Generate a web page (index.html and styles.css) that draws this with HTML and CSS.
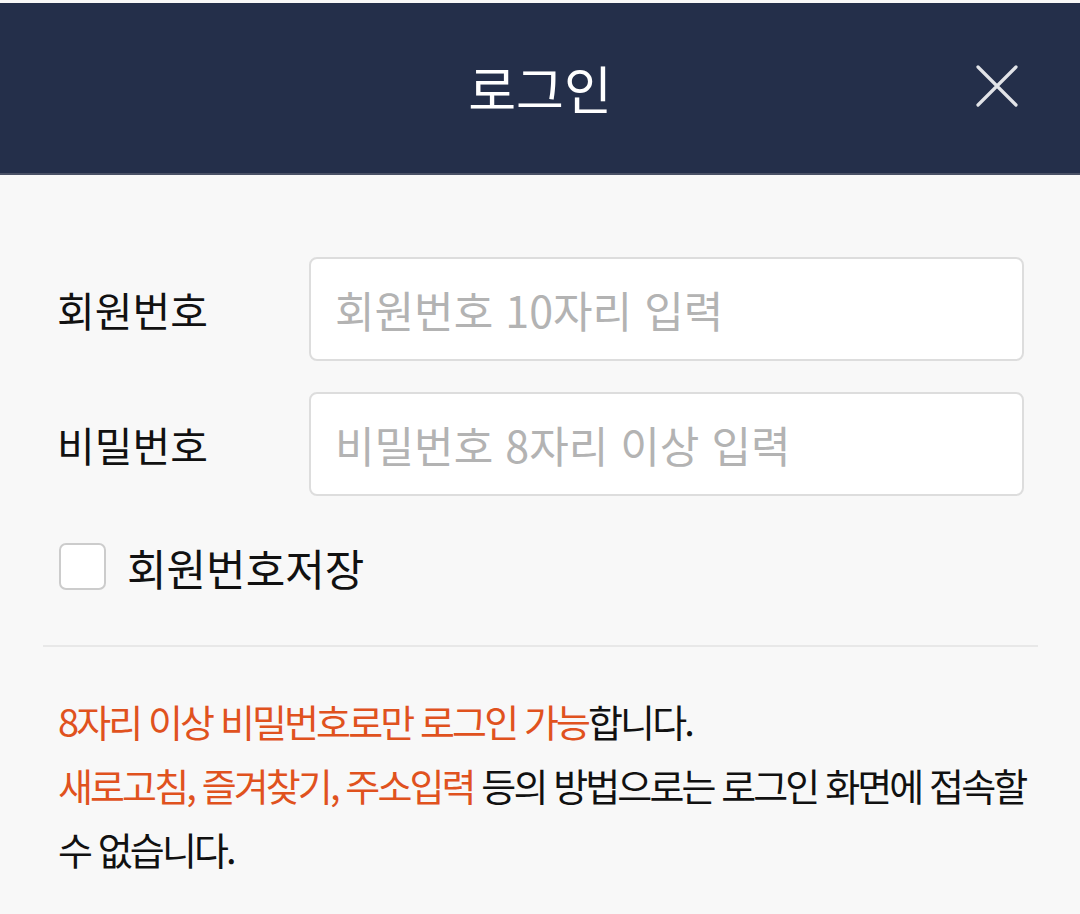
FILE: index.html
```html
<!DOCTYPE html>
<html lang="ko">
<head>
<meta charset="utf-8">
<title>로그인</title>
<link rel="stylesheet" href="styles.css">
</head>
<body>
<div class="page">
  <header class="header">
    <h1 class="title">로그인</h1>
    <button class="close" type="button" aria-label="닫기">
      <svg width="42" height="42" viewBox="0 0 42 42"><path d="M2 2 L40 40 M40 2 L2 40" stroke="#e2e4e8" stroke-width="3.2" stroke-linecap="round" fill="none"/></svg>
    </button>
  </header>
  <main class="content">
    <form class="form">
      <div class="row">
        <label class="label" for="mid">회원번호</label>
        <input class="input" id="mid" type="text" placeholder="회원번호 10자리 입력">
      </div>
      <div class="row">
        <label class="label" for="pw">비밀번호</label>
        <input class="input" id="pw" type="password" placeholder="비밀번호 8자리 이상 입력">
      </div>
      <label class="save">
        <span class="checkbox"></span>
        <span class="save-text">회원번호저장</span>
      </label>
    </form>
    <div class="divider"></div>
    <p class="notice"><span class="hl">8자리 이상 비밀번호로만 로그인 가능</span>합니다.<br><span class="hl">새로고침, 즐겨찾기, 주소입력</span> 등의 방법으로는 로그인 화면에 접속할 수 없습니다.</p>
  </main>
</div>
</body>
</html>
```
FILE: styles.css
```css
* { box-sizing: border-box; }
html, body {
  margin: 0;
  padding: 0;
  background: #f8f8f8;
  font-family: "Noto Sans CJK KR", "Noto Sans", sans-serif;
}
.page {
  padding-top: 3px;
  min-height: 914px;
  background: #f8f8f8;
}
.header {
  position: relative;
  height: 172px;
  background: #242f4a;
  border-bottom: 2px solid #4a5166;
  display: flex;
  align-items: center;
  justify-content: center;
}
.title {
  margin: 0;
  color: #ffffff;
  font-size: 52px;
  font-weight: 400;
  line-height: 1;
}
.close {
  position: absolute;
  right: 62px;
  top: 62px;
  width: 42px;
  height: 42px;
  padding: 0;
  border: 0;
  background: transparent;
  display: flex;
}
.content {
  padding: 82px 42px 0 43px;
}
.form {
  padding: 0 14px 0 14px;
  display: flex;
  flex-direction: column;
}
.row {
  display: flex;
  align-items: center;
  height: 104px;
  margin-bottom: 31px;
}
.row + .row { margin-bottom: 47px; }
.label {
  width: 252px;
  font-size: 41px;
  color: #111111;
}
.input {
  flex: 1;
  height: 104px;
  border: 2px solid #dddddd;
  border-radius: 8px;
  background: #ffffff;
  padding: 0 24px;
  font-family: inherit;
  font-size: 43px;
  color: #111;
  outline: none;
}
.input::placeholder { color: #b3b3b3; }
.save {
  display: flex;
  align-items: center;
  height: 47px;
  gap: 21px;
  padding-left: 2px;
}
.checkbox {
  width: 47px;
  height: 47px;
  border: 2px solid #cccccc;
  border-radius: 7px;
  background: #ffffff;
}
.save-text {
  font-size: 43px;
  color: #111;
}
.divider {
  margin-top: 55px;
  height: 2px;
  background: #e8e8e8;
}
.notice {
  margin: 42px 0 0 15px;
  font-size: 38px;
  line-height: 64px;
  letter-spacing: -2.9px;
  color: #111111;
  word-break: keep-all;
}
.hl { color: #e0521e; }
```
